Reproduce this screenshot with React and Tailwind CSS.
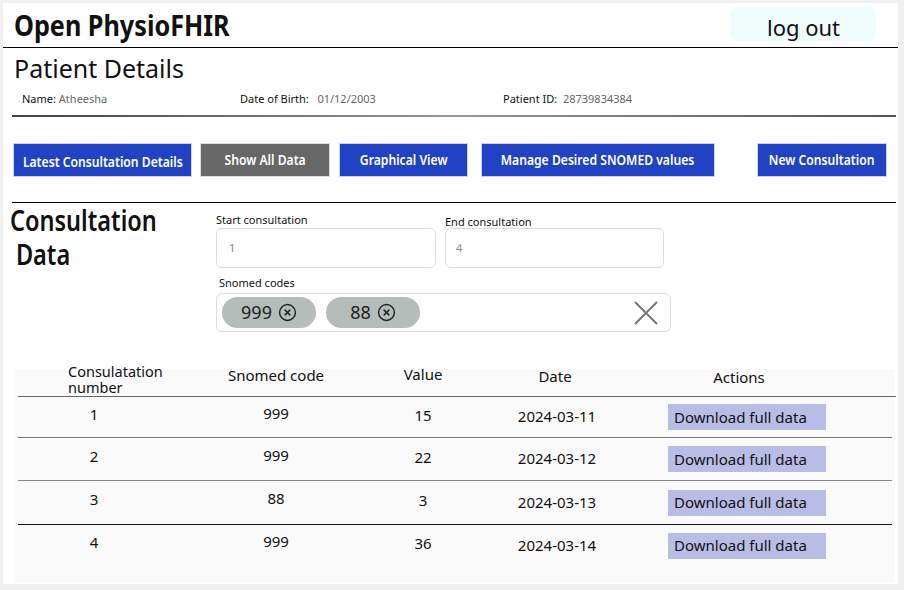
import { CircleX } from "lucide-react";

const rows = [
  { n: "1", code: "999", value: "15", date: "2024-03-11", h: "h-[41px]", line: "border-[#777]" },
  { n: "2", code: "999", value: "22", date: "2024-03-12", h: "h-[43px]", line: "border-[#888]" },
  { n: "3", code: "88", value: "3", date: "2024-03-13", h: "h-[44px]", line: "border-[#111]" },
  { n: "4", code: "999", value: "36", date: "2024-03-14", h: "h-[42px]", line: "border-transparent" },
];

const cols = "grid grid-cols-[152px_212px_82px_182px_202px]";

function Chip({ label }) {
  return (
    <div className="flex h-[31px] w-[94px] items-center justify-center gap-[6px] rounded-full bg-[#b5bcb9] text-[18px] text-[#222]">
      <span>{label}</span>
      <CircleX size={19} strokeWidth={1.8} />
    </div>
  );
}

function NavButton({ label, className }) {
  return (
    <button className={`flex h-[34px] items-center justify-center border text-[13.5px] font-semibold text-white ${className}`}>
      <span className="inline-block scale-x-[0.9] whitespace-nowrap">{label}</span>
    </button>
  );
}

export default function App() {
  return (
    <div className="h-[590px] w-[904px] overflow-hidden bg-[#f0f0f0] pl-[3px] pt-[3px] font-['Noto_Sans',sans-serif] text-[#111]">
      <div className="h-[581px] w-[895px] bg-white">
        {/* header */}
        <div className="flex h-[45px] items-center justify-between border-b border-black pl-[11px] pr-[22px]">
          <h1 className="origin-left scale-x-[0.9] whitespace-nowrap text-[28px] font-bold">Open PhysioFHIR</h1>
          <button className="mt-[-2px] h-[34px] w-[145px] rounded-md bg-[#f0fcfc] pt-[4px] text-[22px]">log out</button>
        </div>

        {/* patient */}
        <h2 className="mt-[4px] pl-[11px] text-[25px] leading-[32px]">Patient Details</h2>
        <div className="mt-[7px] grid grid-cols-[218px_263px_auto] pl-[19px] text-[11px] leading-[16px]">
          <div>
            Name: <span className="text-[#666]">Atheesha</span>
          </div>
          <div>
            Date of Birth:&nbsp;&nbsp; <span className="text-[#666]">01/12/2003</span>
          </div>
          <div>
            Patient ID:&nbsp; <span className="text-[#666]">28739834384</span>
          </div>
        </div>
        <div className="ml-[9px] mt-[8px] h-[2px] w-[884px] bg-gradient-to-r from-[#444] via-[#999] to-[#555]" />

        {/* nav buttons */}
        <div className="mt-[26px] flex pl-[10px]">
          <NavButton label="Latest Consultation Details" className="w-[179px] border-[#c9d2f2] bg-[#2143c3] pt-[4px]" />
          <NavButton label="Show All Data" className="ml-[8px] w-[130px] border-[#ddd] bg-[#676767]" />
          <NavButton label="Graphical View" className="ml-[9px] w-[129px] border-[#c9d2f2] bg-[#2143c3]" />
          <NavButton label="Manage Desired SNOMED values" className="ml-[13px] w-[234px] border-[#c9d2f2] bg-[#2143c3]" />
          <NavButton label="New Consultation" className="ml-[42px] w-[130px] border-[#c9d2f2] bg-[#2143c3]" />
        </div>
        <div className="ml-[9px] mt-[25px] h-px w-[884px] bg-black" />

        {/* consultation filters */}
        <div className="flex">
          <div className="w-[213px] pl-[7px] text-[28px] font-semibold leading-[34px]">
            <div className="origin-left scale-x-[0.84] whitespace-nowrap">Consultation</div>
            <div className="origin-left scale-x-[0.84] whitespace-nowrap pl-[7px]">Data</div>
          </div>
          <div className="flex flex-col">
            <div className="flex gap-[9px]">
              <div>
                <div className="mt-[10px] text-[11px] leading-[14px]">Start consultation</div>
                <div className="mt-[1px] flex h-[40px] w-[220px] items-center rounded-md border border-[#ddd] pl-[12px] text-[11px] text-[#888]">1</div>
              </div>
              <div>
                <div className="mt-[12px] text-[11px] leading-[14px]">End consultation</div>
                <div className="mt-[-1px] flex h-[40px] w-[219px] items-center rounded-md border border-[#ddd] pl-[10px] text-[11px] text-[#888]">4</div>
              </div>
            </div>
            <div className="mt-[8px] pl-[3px] text-[11px] leading-[14px]">Snomed codes</div>
            <div className="mt-[3px] flex h-[39px] w-[455px] items-center gap-[10px] rounded-md border border-[#ddd] pl-[5px] pr-[12px]">
              <Chip label="999" />
              <Chip label="88" />
              <svg className="ml-auto" width="24" height="24" viewBox="0 0 24 24" fill="none" stroke="#777" strokeWidth="2">
                <path d="M1 1L23 23M23 1L1 23" />
              </svg>
            </div>
          </div>
        </div>

        {/* table */}
        <div className="ml-[11px] mt-[37px] h-[214px] w-[881px] bg-[#fafafa] text-[15px]">
          <div className={`${cols} ml-[4px] h-[28px] w-[878px] border-b border-[#666]`}>
            <div className="mt-[-6px] pl-[50px] text-[14.5px] leading-[16px]">
              Consulatation
              <br />
              number
            </div>
            <div className="mt-[-4px] text-center leading-[20px]">Snomed code</div>
            <div className="mt-[-5px] text-center leading-[20px]">Value</div>
            <div className="mt-[-3px] text-center leading-[20px]">Date</div>
            <div className="mt-[-2px] pr-[16px] text-center leading-[20px]">Actions</div>
          </div>
          {rows.map((r) => (
            <div key={r.n} className={`${cols} ml-[4px] w-[874px] items-center border-b ${r.h} ${r.line}`}>
              <div className="pb-[6px] text-center">{r.n}</div>
              <div className="pb-[8px] text-center">{r.code}</div>
              <div className="pb-[4px] text-center">{r.value}</div>
              <div className="pb-[1px] pl-[4px] text-center">{r.date}</div>
              <div className="flex justify-center">
                <button className="h-[26px] w-[158px] bg-[#b9bde6] pl-[6px] text-left text-[15px] text-[#111]">Download full data</button>
              </div>
            </div>
          ))}
        </div>
      </div>
    </div>
  );
}
